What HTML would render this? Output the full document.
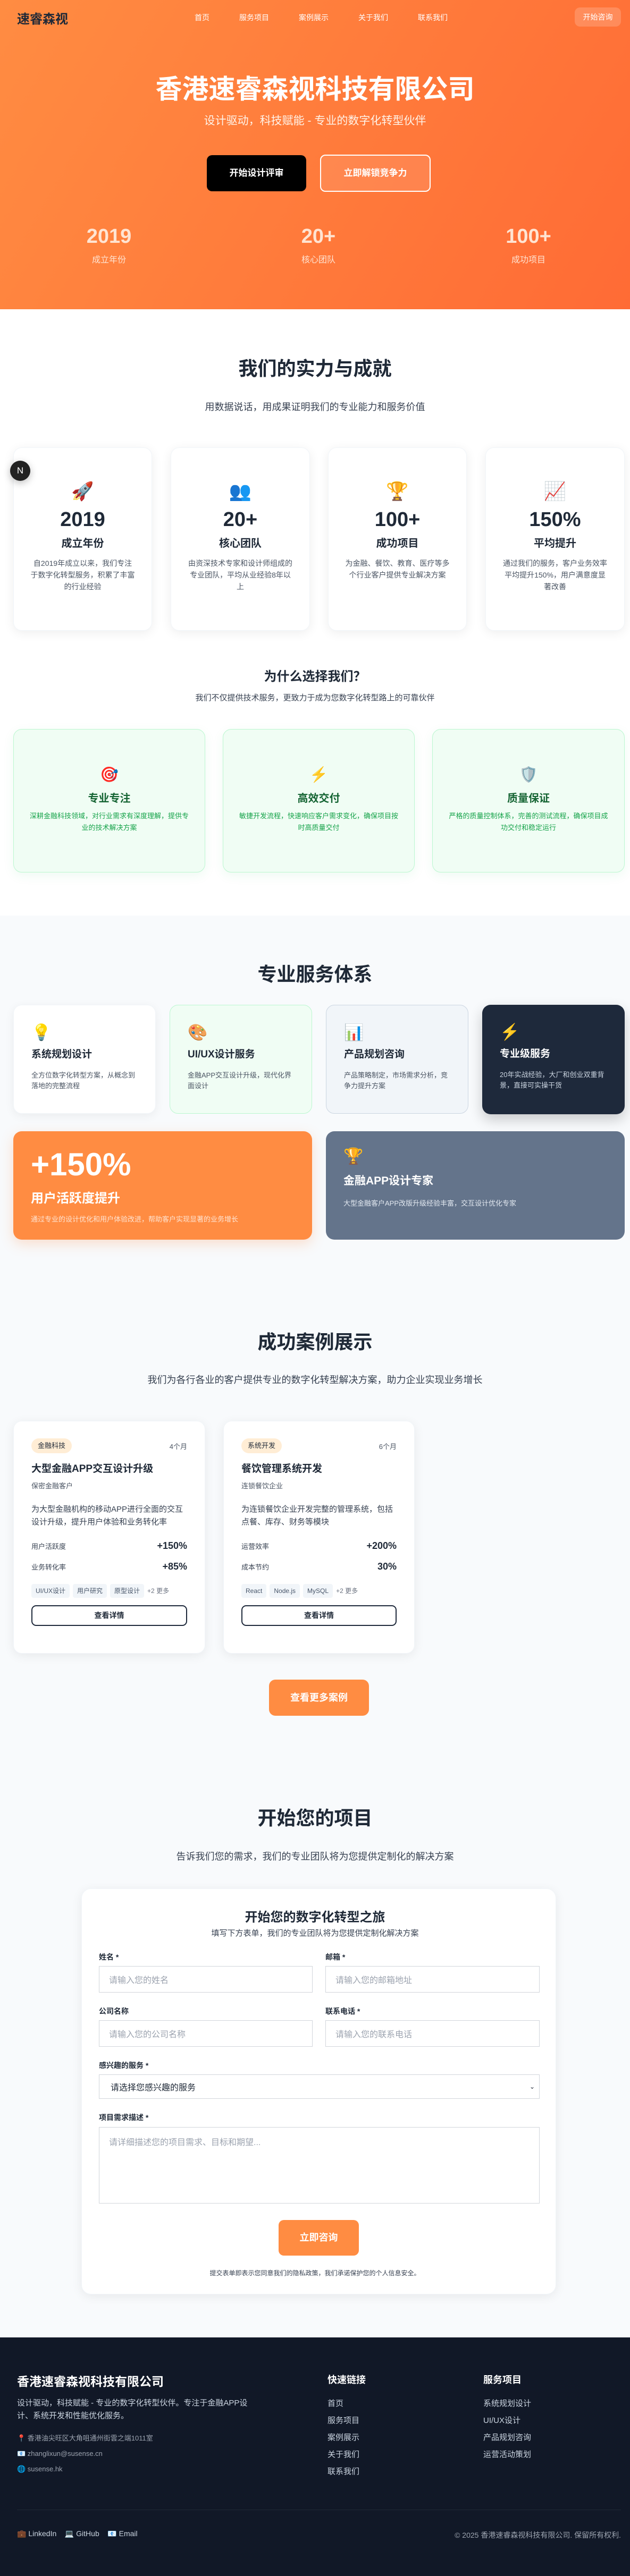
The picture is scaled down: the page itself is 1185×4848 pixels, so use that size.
<!DOCTYPE html>
<html lang="zh"><head><meta charset="utf-8">
<style>
*{margin:0;padding:0;box-sizing:border-box}
body{width:1185px;height:4848px;position:relative;font-family:"Liberation Sans","Noto Sans CJK SC",sans-serif;background:#f8fafc;color:#1f2937;overflow:hidden}
.a{position:absolute}
.c{text-align:center;left:0;width:1185px}
.hero{left:0;top:0;width:1185px;height:582px;background:linear-gradient(120deg,#ff8c42 0%,#ff6b35 100%)}
.nav{color:#fff;font-size:14px;top:23px}
.h2{font-size:36px;font-weight:700;color:#1f2937}
.sub{font-size:18px;color:#374151}
.card{background:#fff;border-radius:16px;box-shadow:0 4px 20px rgba(0,0,0,.07);border:1px solid #f1f5f9}
.stat{text-align:center}
.emo{font-family:"Noto Color Emoji","DejaVu Sans",sans-serif}
.gcard{background:#f0fdf4;border:1px solid #bbf7d0;border-radius:16px;box-shadow:0 6px 20px rgba(34,197,94,.08);text-align:center}
.scard{border-radius:16px;padding:0 33px}
.lab{font-size:14px;font-weight:700;color:#1f2937}
.inp{border:1px solid #d1d5db;background:#fff;font-size:16px;color:#9ca3af;padding-left:18px;display:flex;align-items:center}
.tag{background:#f1f5f9;color:#475569;font-size:12px;border-radius:4px;padding:0 8px;height:26px;line-height:26px;display:inline-block;margin-right:6px}
.fl{color:#cbd5e1;font-size:15px}
.sd{font-size:14px;color:#4b5563;line-height:22px;margin:14px 30px 0}
</style></head><body>
<div class="a hero"></div>
<div class="a" style="left:32px;top:16px;font-size:24px;font-weight:700;color:#1f2937">速睿森视</div>
<div class="a nav" style="left:366px">首页</div>
<div class="a nav" style="left:450px">服务项目</div>
<div class="a nav" style="left:562px">案例展示</div>
<div class="a nav" style="left:674px">关于我们</div>
<div class="a nav" style="left:786px">联系我们</div>
<div class="a" style="left:1081px;top:14px;width:87px;height:36px;border-radius:10px;background:rgba(255,255,255,.18);color:#fff;font-size:14px;line-height:36px;text-align:center">开始咨询</div>
<div class="a c" style="top:128px;font-size:50px;font-weight:700;color:#fff">香港速睿森视科技有限公司</div>
<div class="a c" style="top:211px;font-size:21px;color:#fff3e8">设计驱动，科技赋能 - 专业的数字化转型伙伴</div>
<div class="a" style="left:389px;top:292px;width:187px;height:68px;background:#000;border-radius:10px;color:#fff;font-size:17px;font-weight:700;line-height:68px;text-align:center">开始设计评审</div>
<div class="a" style="left:602px;top:291px;width:208px;height:70px;border:2px solid #fff;background:rgba(255,255,255,.1);border-radius:10px;color:#fff;font-size:17px;font-weight:700;line-height:66px;text-align:center">立即解锁竞争力</div>
<div class="a stat" style="left:105px;top:424px;width:200px;color:#ffe4d2"><div style="font-size:38px;font-weight:700">2019</div><div style="font-size:16px;margin-top:8px">成立年份</div></div>
<div class="a stat" style="left:499px;top:424px;width:200px;color:#ffe4d2"><div style="font-size:38px;font-weight:700">20+</div><div style="font-size:16px;margin-top:8px">核心团队</div></div>
<div class="a stat" style="left:894px;top:424px;width:200px;color:#ffe4d2"><div style="font-size:38px;font-weight:700">100+</div><div style="font-size:16px;margin-top:8px">成功项目</div></div>

<div class="a" style="left:0;top:582px;width:1185px;height:1141px;background:#fff"></div>
<div class="a c h2" style="top:665px">我们的实力与成就</div>
<div class="a c sub" style="top:752px">用数据说话，用成果证明我们的专业能力和服务价值</div>
<div class="a card stat" style="left:25px;top:842px;width:261px;height:345px"><div class="emo" style="margin-top:62px;font-size:34px">🚀</div><div style="font-size:38px;font-weight:700;margin-top:12px">2019</div><div style="font-size:20px;font-weight:700;margin-top:6px">成立年份</div><div class="sd">自2019年成立以来，我们专注于数字化转型服务，积累了丰富的行业经验</div></div>
<div class="a card stat" style="left:321px;top:842px;width:262px;height:345px"><div class="emo" style="margin-top:62px;font-size:34px">👥</div><div style="font-size:38px;font-weight:700;margin-top:12px">20+</div><div style="font-size:20px;font-weight:700;margin-top:6px">核心团队</div><div class="sd">由资深技术专家和设计师组成的专业团队，平均从业经验8年以上</div></div>
<div class="a card stat" style="left:617px;top:842px;width:261px;height:345px"><div class="emo" style="margin-top:62px;font-size:34px">🏆</div><div style="font-size:38px;font-weight:700;margin-top:12px">100+</div><div style="font-size:20px;font-weight:700;margin-top:6px">成功项目</div><div class="sd">为金融、餐饮、教育、医疗等多个行业客户提供专业解决方案</div></div>
<div class="a card stat" style="left:913px;top:842px;width:262px;height:345px"><div class="emo" style="margin-top:62px;font-size:34px">📈</div><div style="font-size:38px;font-weight:700;margin-top:12px">150%</div><div style="font-size:20px;font-weight:700;margin-top:6px">平均提升</div><div class="sd">通过我们的服务，客户业务效率平均提升150%，用户满意度显著改善</div></div>
<div class="a" style="left:19px;top:867px;width:38px;height:38px;border-radius:50%;background:#222;color:#fff;font-size:17px;line-height:38px;text-align:center;box-shadow:0 4px 14px rgba(0,0,0,.25)">N</div>
<div class="a c" style="top:1253px;font-size:24px;font-weight:700;color:#1f2937">为什么选择我们？</div>
<div class="a c" style="top:1302px;font-size:15px;color:#374151">我们不仅提供技术服务，更致力于成为您数字化转型路上的可靠伙伴</div>
<div class="a gcard" style="left:25px;top:1372px;width:361px;height:270px"><div class="emo" style="margin-top:68px;font-size:28px">🎯</div><div style="font-size:20px;font-weight:700;color:#166534;margin-top:12px">专业专注</div><div style="font-size:13px;color:#16a34a;line-height:22px;margin:10px 30px 0">深耕金融科技领域，对行业需求有深度理解，提供专业的技术解决方案</div></div>
<div class="a gcard" style="left:419px;top:1372px;width:361px;height:270px"><div class="emo" style="margin-top:68px;font-size:28px">⚡</div><div style="font-size:20px;font-weight:700;color:#166534;margin-top:12px">高效交付</div><div style="font-size:13px;color:#16a34a;line-height:22px;margin:10px 30px 0">敏捷开发流程，快速响应客户需求变化，确保项目按时高质量交付</div></div>
<div class="a gcard" style="left:813px;top:1372px;width:362px;height:270px"><div class="emo" style="margin-top:68px;font-size:28px">🛡️</div><div style="font-size:20px;font-weight:700;color:#166534;margin-top:12px">质量保证</div><div style="font-size:13px;color:#16a34a;line-height:22px;margin:10px 30px 0">严格的质量控制体系，完善的测试流程，确保项目成功交付和稳定运行</div></div>

<div class="a c h2" style="top:1805px">专业服务体系</div>
<div class="a scard" style="left:25px;top:1891px;width:268px;height:205px;background:#fff;border:1px solid #f1f5f9;box-shadow:0 4px 18px rgba(0,0,0,.06)"><div class="emo" style="margin-top:34px;font-size:30px">💡</div><div style="font-size:19px;font-weight:700;margin-top:8px">系统规划设计</div><div style="font-size:13px;color:#4b5563;line-height:20px;margin-top:18px">全方位数字化转型方案，从概念到落地的完整流程</div></div>
<div class="a scard" style="left:319px;top:1891px;width:268px;height:205px;background:#f0fdf4;border:1px solid #bbf7d0"><div class="emo" style="margin-top:34px;font-size:30px">🎨</div><div style="font-size:19px;font-weight:700;margin-top:8px">UI/UX设计服务</div><div style="font-size:13px;color:#4b5563;line-height:20px;margin-top:18px">金融APP交互设计升级，现代化界面设计</div></div>
<div class="a scard" style="left:613px;top:1891px;width:268px;height:205px;background:#f1f5f9;border:1px solid #cbd5e1"><div class="emo" style="margin-top:34px;font-size:30px">📊</div><div style="font-size:19px;font-weight:700;margin-top:8px">产品规划咨询</div><div style="font-size:13px;color:#4b5563;line-height:20px;margin-top:18px">产品策略制定，市场需求分析，竞争力提升方案</div></div>
<div class="a scard" style="left:907px;top:1891px;width:268px;height:206px;background:#1e293b;box-shadow:0 10px 25px rgba(0,0,0,.2)"><div class="emo" style="margin-top:34px;font-size:30px">⚡</div><div style="font-size:19px;font-weight:700;margin-top:8px;color:#fff">专业级服务</div><div style="font-size:13px;color:#cbd5e1;line-height:20px;margin-top:18px">20年实战经验，大厂和创业双重背景，直接可实操干货</div></div>
<div class="a scard" style="left:25px;top:2129px;width:562px;height:204px;background:#ff8c42;color:#fff;box-shadow:0 8px 24px rgba(255,140,66,.25)"><div style="font-size:60px;font-weight:700;margin-top:30px;line-height:66px">+150%</div><div style="font-size:24px;font-weight:700;margin-top:10px">用户活跃度提升</div><div style="font-size:13px;color:#ffe4d2;margin-top:14px">通过专业的设计优化和用户体验改进，帮助客户实现显著的业务增长</div></div>
<div class="a scard" style="left:613px;top:2129px;width:562px;height:204px;background:#64748b;color:#fff"><div class="emo" style="margin-top:30px;font-size:30px">🏆</div><div style="font-size:21px;font-weight:700;margin-top:12px">金融APP设计专家</div><div style="font-size:13px;color:#e2e8f0;margin-top:18px">大型金融客户APP改版升级经验丰富，交互设计优化专家</div></div>

<div class="a c h2" style="top:2497px">成功案例展示</div>
<div class="a c sub" style="top:2583px">我们为各行各业的客户提供专业的数字化转型解决方案，助力企业实现业务增长</div>
<div class="a card" style="left:25px;top:2674px;width:361px;height:438px;padding:32px 33px 0">
 <div style="display:flex;justify-content:space-between;align-items:center"><span style="background:#ffedd5;color:#1f2937;font-size:13px;border-radius:14px;padding:0 12px;height:28px;line-height:28px">金融科技</span><span style="font-size:13px;color:#4b5563">4个月</span></div>
 <div style="font-size:19px;font-weight:700;margin-top:14px">大型金融APP交互设计升级</div>
 <div style="font-size:13px;color:#4b5563;margin-top:10px">保密金融客户</div>
 <div style="font-size:15px;color:#374151;line-height:24px;margin-top:24px">为大型金融机构的移动APP进行全面的交互设计升级，提升用户体验和业务转化率</div>
 <div style="display:flex;justify-content:space-between;align-items:center;margin-top:22px;font-size:13px;color:#374151">用户活跃度<b style="font-size:18px;color:#1f2937">+150%</b></div>
 <div style="display:flex;justify-content:space-between;align-items:center;margin-top:18px;font-size:13px;color:#374151">业务转化率<b style="font-size:18px;color:#1f2937">+85%</b></div>
 <div style="margin-top:22px"><span class="tag">UI/UX设计</span><span class="tag">用户研究</span><span class="tag">原型设计</span><span style="font-size:12px;color:#6b7280">+2 更多</span></div>
 <div style="margin-top:14px;height:39px;border:2px solid #1e293b;border-radius:9px;text-align:center;line-height:35px;font-size:14px;font-weight:700">查看详情</div>
</div>
<div class="a card" style="left:420px;top:2674px;width:360px;height:438px;padding:32px 33px 0">
 <div style="display:flex;justify-content:space-between;align-items:center"><span style="background:#ffedd5;color:#1f2937;font-size:13px;border-radius:14px;padding:0 12px;height:28px;line-height:28px">系统开发</span><span style="font-size:13px;color:#4b5563">6个月</span></div>
 <div style="font-size:19px;font-weight:700;margin-top:14px">餐饮管理系统开发</div>
 <div style="font-size:13px;color:#4b5563;margin-top:10px">连锁餐饮企业</div>
 <div style="font-size:15px;color:#374151;line-height:24px;margin-top:24px">为连锁餐饮企业开发完整的管理系统，包括点餐、库存、财务等模块</div>
 <div style="display:flex;justify-content:space-between;align-items:center;margin-top:22px;font-size:13px;color:#374151">运营效率<b style="font-size:18px;color:#1f2937">+200%</b></div>
 <div style="display:flex;justify-content:space-between;align-items:center;margin-top:18px;font-size:13px;color:#374151">成本节约<b style="font-size:18px;color:#1f2937">30%</b></div>
 <div style="margin-top:22px"><span class="tag">React</span><span class="tag">Node.js</span><span class="tag">MySQL</span><span style="font-size:12px;color:#6b7280">+2 更多</span></div>
 <div style="margin-top:14px;height:39px;border:2px solid #1e293b;border-radius:9px;text-align:center;line-height:35px;font-size:14px;font-weight:700">查看详情</div>
</div>
<div class="a" style="left:506px;top:3161px;width:188px;height:68px;background:#ff8c42;border-radius:12px;color:#fff;font-size:18px;font-weight:700;line-height:68px;text-align:center">查看更多案例</div>

<div class="a c h2" style="top:3393px">开始您的项目</div>
<div class="a c sub" style="top:3480px">告诉我们您的需求，我们的专业团队将为您提供定制化的解决方案</div>
<div class="a card" style="left:153px;top:3554px;width:893px;height:764px;border-radius:18px"></div>
<div class="a c" style="top:3588px;font-size:24px;font-weight:700">开始您的数字化转型之旅</div>
<div class="a c" style="top:3627px;font-size:15px;color:#374151">填写下方表单，我们的专业团队将为您提供定制化解决方案</div>
<div class="a lab" style="left:186px;top:3673px">姓名 *</div>
<div class="a lab" style="left:612px;top:3673px">邮箱 *</div>
<div class="a inp" style="left:186px;top:3700px;width:402px;height:50px">请输入您的姓名</div>
<div class="a inp" style="left:612px;top:3700px;width:403px;height:50px">请输入您的邮箱地址</div>
<div class="a lab" style="left:186px;top:3775px">公司名称</div>
<div class="a lab" style="left:612px;top:3775px">联系电话 *</div>
<div class="a inp" style="left:186px;top:3802px;width:402px;height:50px">请输入您的公司名称</div>
<div class="a inp" style="left:612px;top:3802px;width:403px;height:50px">请输入您的联系电话</div>
<div class="a lab" style="left:186px;top:3877px">感兴趣的服务 *</div>
<div class="a inp" style="left:186px;top:3904px;width:829px;height:46px;color:#1f2937;padding-left:21px;justify-content:space-between;padding-right:8px">请选择您感兴趣的服务<span style="font-size:12px">⌄</span></div>
<div class="a lab" style="left:186px;top:3975px">项目需求描述 *</div>
<div class="a inp" style="left:186px;top:4003px;width:829px;height:144px;align-items:flex-start;padding-top:14px">请详细描述您的项目需求、目标和期望...</div>
<div class="a" style="left:524px;top:4178px;width:151px;height:67px;background:#ff8c42;border-radius:10px;color:#fff;font-size:18px;font-weight:700;line-height:67px;text-align:center">立即咨询</div>
<div class="a c" style="top:4269px;font-size:12px;color:#374151">提交表单即表示您同意我们的隐私政策，我们承诺保护您的个人信息安全。</div>

<div class="a" style="left:0;top:4399px;width:1185px;height:449px;background:#111827"></div>
<div class="a" style="left:32px;top:4463px;font-size:23px;font-weight:700;color:#fff">香港速睿森视科技有限公司</div>
<div class="a fl" style="left:32px;top:4511px;width:460px;line-height:24px">设计驱动，科技赋能 - 专业的数字化转型伙伴。专注于金融APP设计、系统开发和性能优化服务。</div>
<div class="a" style="left:32px;top:4575px;font-size:13px;color:#9ca3af;line-height:28px"><span class="emo">📍</span> 香港油尖旺区大角咀通州街雲之端1011室<br><span class="emo">📧</span> zhanglixun@susense.cn<br><span class="emo">🌐</span> susense.hk</div>
<div class="a" style="left:616px;top:4465px;font-size:18px;font-weight:700;color:#fff">快速链接</div>
<div class="a fl" style="left:616px;top:4508px;line-height:32px">首页<br>服务项目<br>案例展示<br>关于我们<br>联系我们</div>
<div class="a" style="left:909px;top:4465px;font-size:18px;font-weight:700;color:#fff">服务项目</div>
<div class="a fl" style="left:909px;top:4508px;line-height:32px">系统规划设计<br>UI/UX设计<br>产品规划咨询<br>运营活动策划</div>
<div class="a" style="left:32px;top:4723px;width:1136px;height:1px;background:#1f2937"></div>
<div class="a" style="left:32px;top:4760px;font-size:14px;color:#cbd5e1"><span class="emo">💼</span> LinkedIn &nbsp;&nbsp;&nbsp;<span class="emo">💻</span> GitHub &nbsp;&nbsp;&nbsp;<span class="emo">📧</span> Email</div>
<div class="a" style="right:17px;top:4761px;font-size:14px;color:#9ca3af">© 2025 香港速睿森视科技有限公司. 保留所有权利.</div>
</body></html>
